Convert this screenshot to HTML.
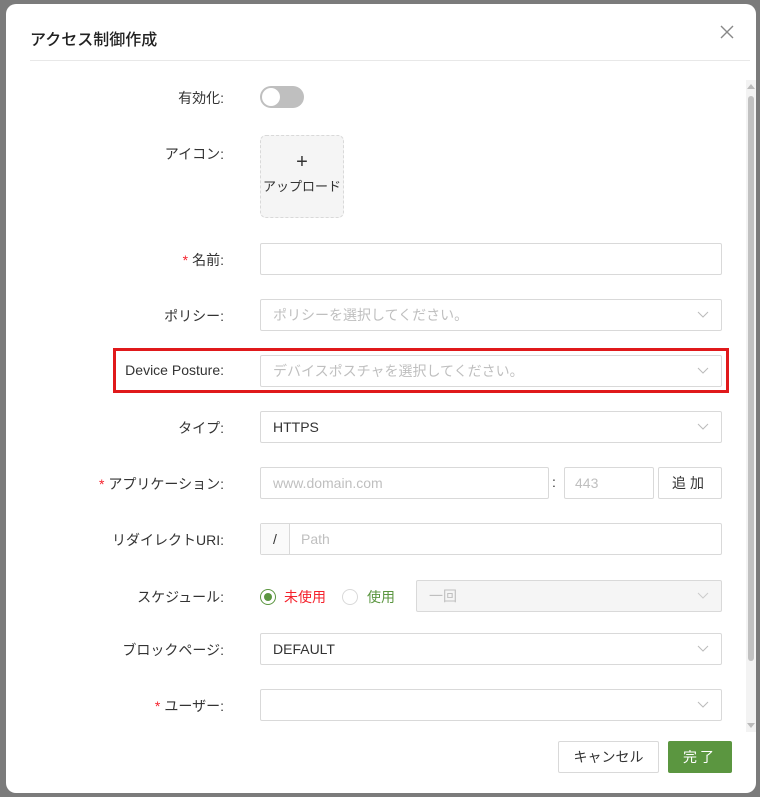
<!DOCTYPE html>
<html><head><meta charset="utf-8"><style>
*{box-sizing:border-box;margin:0;padding:0}
body{width:760px;height:797px;background:#7b7b7b;font-family:"Liberation Sans","Noto Sans CJK JP",sans-serif;font-size:14px;color:#333;position:relative;overflow:hidden}
.modal{position:absolute;left:6px;top:4px;width:750px;height:789px;background:#fff;border-radius:10px}
.title{position:absolute;left:24px;top:22px;font-size:16px;color:#222;font-weight:500}
.hr{position:absolute;left:24px;right:6px;top:56px;height:1px;background:#e8e8e8}
.close{position:absolute;left:713px;top:20px}
.lbl{position:absolute;right:532px;font-size:14px;color:#333;text-align:right;white-space:nowrap}
.req{color:#f5222d;margin-right:4px}
.inp{position:absolute;left:254px;width:462px;height:32px;border:1px solid #d9d9d9;border-radius:2px;background:#fff;padding-left:12px;line-height:30px;color:#333;font-size:14px}
.ph{color:#bfbfbf}
.arr{position:absolute;right:12px;top:10px}
.sb{position:absolute;left:740px;top:76px;width:10px;height:652px;background:#f3f3f3}
.thumb{position:absolute;left:2px;top:16px;width:6px;height:565px;background:#c1c1c1;border-radius:3px}
</style></head><body>
<div class="modal">
<div class="title">アクセス制御作成</div>
<svg class="close" width="16" height="16" viewBox="0 0 16 16"><path d="M2 2L14 14M14 2L2 14" stroke="#888" stroke-width="1.4"/></svg>
<div class="hr"></div>
<div class="sb"><div class="thumb"></div>
<svg style="position:absolute;left:1px;top:3px" width="8" height="6"><path d="M0 6L4 1L8 6Z" fill="#bbb"/></svg>
<svg style="position:absolute;left:1px;top:643px" width="8" height="6"><path d="M0 0L4 5L8 0Z" fill="#bbb"/></svg></div>

<div class="lbl" style="top:84px">有効化:</div>
<div style="position:absolute;left:254px;top:82px;width:44px;height:22px;border-radius:11px;background:#bfbfbf"><div style="position:absolute;left:2px;top:2px;width:18px;height:18px;border-radius:50%;background:#fff"></div></div>

<div class="lbl" style="top:140px">アイコン:</div>
<div style="position:absolute;left:254px;top:131px;width:84px;height:83px;border:1px dashed #d9d9d9;border-radius:6px;background:#f5f5f5;text-align:center;font-size:13px;color:#333"><div style="margin-top:16px;font-size:20px;line-height:20px">+</div><div style="margin-top:4px">アップロード</div></div>

<div class="lbl" style="top:246px"><span class="req">*</span>名前:</div>
<div class="inp" style="top:239px"></div>

<div class="lbl" style="top:302px">ポリシー:</div>
<div class="inp" style="top:295px"><span class="ph">ポリシーを選択してください。</span><svg class="arr" width="12" height="10"><path d="M1 2L6 7L11 2" stroke="#bbb" fill="none"/></svg></div>

<div style="position:absolute;left:107px;top:344px;width:616px;height:45px;border:3px solid #e0191b"></div>
<div class="lbl" style="top:358px">Device Posture:</div>
<div class="inp" style="top:351px"><span class="ph">デバイスポスチャを選択してください。</span><svg class="arr" width="12" height="10"><path d="M1 2L6 7L11 2" stroke="#bbb" fill="none"/></svg></div>

<div class="lbl" style="top:414px">タイプ:</div>
<div class="inp" style="top:407px">HTTPS<svg class="arr" width="12" height="10"><path d="M1 2L6 7L11 2" stroke="#bbb" fill="none"/></svg></div>

<div class="lbl" style="top:470px"><span class="req">*</span>アプリケーション:</div>
<div class="inp" style="top:463px;width:289px"><span class="ph">www.domain.com</span></div>
<div style="position:absolute;left:546px;top:470px">:</div>
<div class="inp" style="top:463px;left:558px;width:90px;padding-left:10px"><span class="ph">443</span></div>
<div class="inp" style="top:463px;left:652px;width:64px;padding-left:0;text-align:center;letter-spacing:4px">追加</div>

<div class="lbl" style="top:526px">リダイレクトURI:</div>
<div class="inp" style="top:519px;padding-left:40px"><span class="ph">Path</span><div style="position:absolute;left:0;top:0;width:29px;height:30px;background:#fafafa;border-right:1px solid #d9d9d9;text-align:center">/</div></div>

<div class="lbl" style="top:583px">スケジュール:</div>
<div style="position:absolute;left:254px;top:585px;width:16px;height:16px;border:1px solid #5b9640;border-radius:50%"><div style="position:absolute;left:3px;top:3px;width:8px;height:8px;border-radius:50%;background:#5b9640"></div></div>
<div style="position:absolute;left:278px;top:583px;color:#f5222d">未使用</div>
<div style="position:absolute;left:336px;top:585px;width:16px;height:16px;border:1px solid #d9d9d9;border-radius:50%"></div>
<div style="position:absolute;left:361px;top:583px;color:#5b9640">使用</div>
<div class="inp" style="top:576px;left:410px;width:306px;background:#f5f5f5"><span class="ph">一回</span><svg class="arr" width="12" height="10"><path d="M1 2L6 7L11 2" stroke="#ccc" fill="none"/></svg></div>

<div class="lbl" style="top:636px">ブロックページ:</div>
<div class="inp" style="top:629px">DEFAULT<svg class="arr" width="12" height="10"><path d="M1 2L6 7L11 2" stroke="#bbb" fill="none"/></svg></div>

<div class="lbl" style="top:692px"><span class="req">*</span>ユーザー:</div>
<div class="inp" style="top:685px"><svg class="arr" width="12" height="10"><path d="M1 2L6 7L11 2" stroke="#bbb" fill="none"/></svg></div>

<div style="position:absolute;left:552px;top:737px;width:101px;height:32px;border:1px solid #d9d9d9;border-radius:2px;text-align:center;line-height:30px">キャンセル</div>
<div style="position:absolute;left:662px;top:737px;width:64px;height:32px;background:#5b9640;border-radius:2px;text-align:center;line-height:32px;color:#fff;letter-spacing:3px">完了</div>
</div>
</body></html>
